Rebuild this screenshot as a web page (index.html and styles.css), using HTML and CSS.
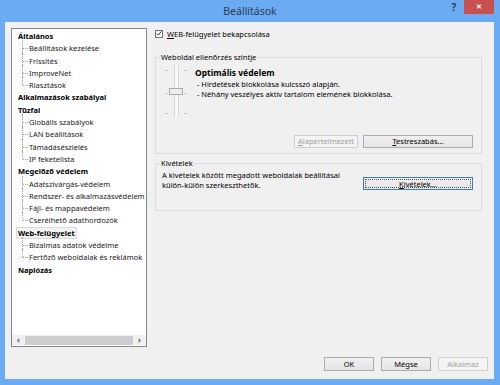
FILE: index.html
```html
<!DOCTYPE html>
<html>
<head>
  <title>Beállítások</title>
  <link rel="stylesheet" href="styles.css">
</head>
<body>
  <div class="window">
    <div class="titlebar">
      <span class="title">Beállítások</span>
      <div class="title-controls">
        <span class="help-btn">?</span>
        <span class="close-btn">&#x2715;</span>
      </div>
    </div>

    <div class="client">
      <div class="main">
        <div class="tree">
          <ul class="tree-list">
            <li class="node">
              <span class="node-title">Általános</span>
              <ul class="children">
                <li>Beállítások kezelése</li>
                <li>Frissítés</li>
                <li>ImproveNet</li>
                <li>Riasztások</li>
              </ul>
            </li>
            <li class="node"><span class="node-title">Alkalmazások szabályai</span></li>
            <li class="node">
              <span class="node-title">Tűzfal</span>
              <ul class="children">
                <li>Globális szabályok</li>
                <li>LAN beállítások</li>
                <li>Támadásészlelés</li>
                <li>IP feketelista</li>
              </ul>
            </li>
            <li class="node">
              <span class="node-title">Megelőző védelem</span>
              <ul class="children">
                <li>Adatszivárgás-védelem</li>
                <li>Rendszer- és alkalmazásvédelem</li>
                <li>Fájl- és mappavédelem</li>
                <li>Cserélhető adathordozók</li>
              </ul>
            </li>
            <li class="node">
              <span class="node-title selected">Web-felügyelet</span>
              <ul class="children">
                <li>Bizalmas adatok védelme</li>
                <li>Fertőző weboldalak és reklámok</li>
              </ul>
            </li>
            <li class="node"><span class="node-title">Naplózás</span></li>
          </ul>
          <div class="hscroll">
            <span class="arrow">&#x2039;</span>
            <span class="thumb"></span>
            <span class="arrow">&#x203A;</span>
          </div>
        </div>

        <div class="panel">
          <label class="check-row">
            <span class="checkbox">
              <svg width="7" height="7" viewBox="0 0 7 7"><path d="M1 3.6 L2.8 5.4 L6 1.2" fill="none" stroke="#222" stroke-width="1.1"/></svg>
            </span>
            <span><u>W</u>EB-felügyelet bekapcsolása</span>
          </label>

          <fieldset class="group group-level">
            <legend>Weboldal ellenőrzés szintje</legend>
            <div class="group-body level-body">
              <div class="level-row">
                <div class="slider">
                  <div class="ticks">
                    <span class="tick-top"></span><span class="tick-mid"></span><span class="tick-bottom"></span>
                  </div>
                  <div class="track">
                    <span class="slider-thumb"></span>
                  </div>
                  <div class="ticks">
                    <span class="tick-top"></span><span class="tick-mid"></span><span class="tick-bottom"></span>
                  </div>
                </div>
                <div class="level-text">
                  <div class="level-name">Optimális védelem</div>
                  <div class="level-desc">- Hirdetések blokkolása kulcsszó alapján.</div>
                  <div class="level-desc">- Néhány veszélyes aktív tartalom elemének blokkolása.</div>
                </div>
              </div>
              <div class="button-row">
                <button class="btn btn-wide" disabled><u>A</u>lapértelmezett</button>
                <button class="btn btn-large"><u>T</u>estreszabás...</button>
              </div>
            </div>
          </fieldset>

          <fieldset class="group group-except">
            <legend>Kivételek</legend>
            <div class="group-body except-body">
              <p class="except-text">A kivételek között megadott weboldalak beállításai<br>külön-külön szerkeszthetők.</p>
              <button class="btn btn-large focused"><span class="focus-ring"><u>K</u>ivételek...</span></button>
            </div>
          </fieldset>
        </div>
      </div>

      <div class="footer">
        <button class="btn btn-dlg">OK</button>
        <button class="btn btn-dlg">Mégse</button>
        <button class="btn btn-dlg" disabled>Alkalmaz</button>
      </div>
    </div>
  </div>
</body>
</html>
```

FILE: styles.css
```css
* {
  margin: 0;
  padding: 0;
  box-sizing: border-box;
}

html, body {
  width: 500px;
  height: 385px;
  overflow: hidden;
}

body {
  background: #6aabf3;
  font-family: 'Noto Sans', 'Open Sans', sans-serif;
  font-size: 7.5px;
  color: #000;
}

.window {
  display: flex;
  flex-direction: column;
  height: 100%;
}

/* Title bar */
.titlebar {
  height: 22px;
  display: flex;
  justify-content: center;
  align-items: flex-start;
  position: relative;
}

.title {
  font-size: 10.5px;
  line-height: 22px;
  color: #2e3d4f;
}

.title-controls {
  position: absolute;
  top: 0;
  right: 6px;
  display: flex;
  align-items: flex-start;
}

.help-btn {
  font-size: 10px;
  font-weight: bold;
  color: #2e3d4f;
  line-height: 14px;
  width: 20px;
  text-align: center;
}

.close-btn {
  width: 30px;
  height: 14px;
  background: #c75050;
  color: #fff;
  font-size: 7px;
  font-weight: bold;
  line-height: 14px;
  text-align: center;
}

/* Client area */
.client {
  flex: 1;
  margin: 0 6px 6px 5px;
  background: #f0f0f0;
  display: flex;
  flex-direction: column;
  padding: 6px 6px 8px 6px;
}

.main {
  flex: 1;
  display: flex;
  gap: 8px;
}

/* Tree */
.tree {
  width: 136px;
  height: 319px;
  background: #fff;
  border: 1px solid #828790;
  display: flex;
  flex-direction: column;
}

.tree-list {
  flex: 1;
  list-style: none;
  padding: 1px 0 0 4px;
  white-space: nowrap;
  overflow: hidden;
  line-height: 12.3px;
  color: #1a1a1a;
}

.node-title {
  display: inline-block;
  font-weight: bold;
  color: #000;
  padding: 0 1px;
  border: 1px solid transparent;
  line-height: 10.3px;
}

.node-title.selected {
  background: #f2f2f2;
  border-color: #dadada;
}

.children {
  list-style: none;
  padding-left: 13px;
}

.children li {
  position: relative;
}

.children li::before {
  content: '';
  position: absolute;
  left: -7px;
  top: -2px;
  bottom: 0;
  border-left: 1px dotted #a0a0a0;
}

.children li:last-child::before {
  bottom: auto;
  height: 8px;
}

.children li::after {
  content: '';
  position: absolute;
  left: -6px;
  top: 6px;
  width: 5px;
  border-top: 1px dotted #a0a0a0;
}

.hscroll {
  height: 10px;
  margin-bottom: 1px;
  display: flex;
  align-items: center;
  background: #f0f0f0;
}

.hscroll .arrow {
  width: 13px;
  text-align: center;
  font-size: 9px;
  line-height: 10px;
  color: #606060;
  font-weight: bold;
}

.hscroll .thumb {
  flex: 1;
  height: 9px;
  background: #cdcdcd;
}

/* Right panel */
.panel {
  width: 327px;
  display: flex;
  flex-direction: column;
}

.check-row {
  display: flex;
  align-items: center;
  gap: 4px;
  height: 9px;
  margin-top: 1px;
}

.checkbox {
  width: 8px;
  height: 8px;
  border: 1px solid #707070;
  background: #fff;
  display: flex;
  align-items: center;
  justify-content: center;
}

.group {
  border: 1px solid #dcdcdc;
  padding: 0 8px 0 6px;
}

.group legend {
  padding: 0 1px 0 0;
  margin-left: -1px;
  line-height: 10px;
}

.group-level {
  margin-top: 14px;
}

.level-body {
  height: 91px;
  display: flex;
  flex-direction: column;
}

.level-row {
  display: flex;
  gap: 8px;
  padding-left: 3px;
  margin-top: 3px;
}

.slider {
  display: flex;
  height: 52px;
}

.ticks {
  display: flex;
  flex-direction: column;
  width: 3px;
}

.ticks span {
  display: block;
  border-top: 1px solid #c8c8c8;
}

.tick-top {
  margin-top: 5px;
}

.tick-mid {
  margin-top: 22px;
}

.tick-bottom {
  margin-top: 19px;
}

.track {
  width: 16px;
  display: flex;
  justify-content: center;
  position: relative;
}

.track::before {
  content: '';
  width: 3px;
  height: 100%;
  background: #f7f7f7;
  border-left: 1px solid #d6d6d6;
  border-right: 1px solid #d6d6d6;
}

.slider-thumb {
  position: absolute;
  top: 23px;
  left: 1px;
  width: 14px;
  height: 7px;
  background: #ececec;
  border: 1px solid #acacac;
}

.level-text {
  padding-top: 2px;
}

.level-name {
  font-weight: bold;
  font-size: 8.5px;
  line-height: 12px;
}

.level-desc {
  padding-left: 2px;
  line-height: 10px;
}

.button-row {
  margin-top: auto;
  margin-bottom: 5px;
  display: flex;
  justify-content: flex-end;
  gap: 5px;
}

.btn {
  font-family: inherit;
  font-size: 7.5px;
  height: 13px;
  line-height: 11px;
  color: #000;
  background: linear-gradient(#f0f0f0, #e5e5e5);
  border: 1px solid #acacac;
  padding: 0;
}

.btn:disabled {
  color: #a0a0a0;
  background: #f4f4f4;
  border-color: #cfcfcf;
}

.btn-wide {
  width: 64px;
}

.btn-large {
  width: 110px;
}

.btn.focused {
  border-color: #3c7fb1;
  padding: 1px;
}

.focus-ring {
  display: block;
  height: 100%;
  border: 1px dotted #555;
  line-height: 9px;
}

.group-except {
  margin-top: 4px;
}

.except-body {
  height: 42px;
  display: flex;
  justify-content: space-between;
  align-items: flex-start;
}

.except-text {
  white-space: nowrap;
  margin-top: 3px;
  line-height: 9.5px;
}

.except-body .btn {
  margin-top: 9px;
}

/* Footer */
.footer {
  display: flex;
  justify-content: flex-end;
  gap: 7px;
  margin-top: 10px;
}

.btn-dlg {
  width: 50px;
  height: 14px;
}
```
